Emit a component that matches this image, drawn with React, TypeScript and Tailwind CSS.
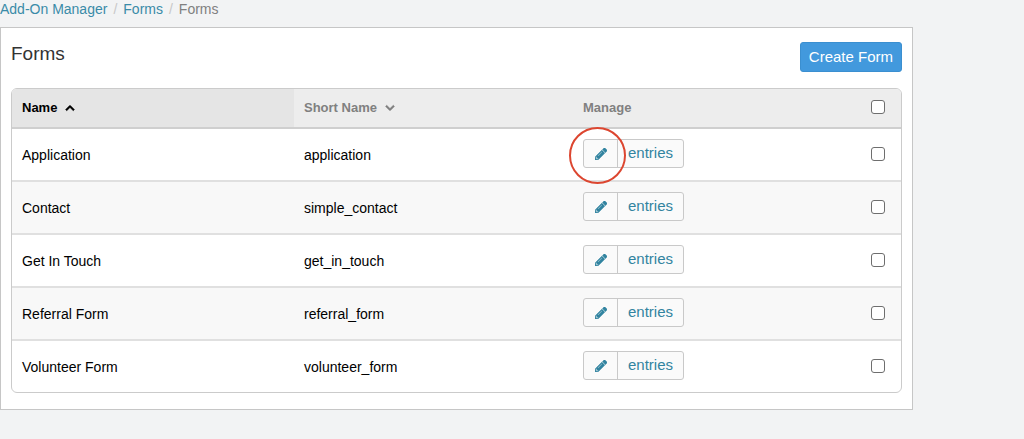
import { FaChevronDown, FaChevronUp, FaPencilAlt } from "react-icons/fa";

type Form = { name: string; shortName: string; highlighted?: boolean };

const forms: Form[] = [
  { name: "Application", shortName: "application", highlighted: true },
  { name: "Contact", shortName: "simple_contact" },
  { name: "Get In Touch", shortName: "get_in_touch" },
  { name: "Referral Form", shortName: "referral_form" },
  { name: "Volunteer Form", shortName: "volunteer_form" },
];

function Checkbox({ label }: { label: string }) {
  return (
    <input
      type="checkbox"
      aria-label={label}
      className="block size-3.5 appearance-none rounded-[3px] border border-[#6e6e6e] bg-white checked:bg-[#4299e1]"
    />
  );
}

function Breadcrumbs() {
  return (
    <nav aria-label="Breadcrumb" className="flex h-[27px] gap-1.5 text-[14px] leading-[18px]">
      <a href="#addons" className="text-[#3a8ba8]">Add-On Manager</a>
      <span className="text-[#c8c8c8]">/</span>
      <a href="#forms" className="text-[#3a8ba8]">Forms</a>
      <span className="text-[#c8c8c8]">/</span>
      <span className="text-[#808080]">Forms</span>
    </nav>
  );
}

function ManageButtons({ form }: { form: Form }) {
  return (
    <div className="relative inline-flex h-[29px] rounded-[3px] border border-[#c9c9c9] bg-[#fafafa] align-top text-[15px] text-[#3284a0]">
      <a
        href="#edit"
        aria-label={`Edit ${form.name}`}
        className="flex w-[34px] items-center justify-center border-r border-[#c9c9c9]"
      >
        <FaPencilAlt className="size-3" stroke="currentColor" strokeWidth="20" />
      </a>
      <a href="#entries" className="flex w-[65px] items-center justify-center">
        entries
      </a>
      {form.highlighted && (
        <span className="pointer-events-none absolute -top-[13px] -left-[15px] size-[57px] rounded-full border-2 border-[#dc4630]" />
      )}
    </div>
  );
}

export default function App() {
  return (
    <main className="min-h-screen bg-[#f2f3f4] pr-[111px] font-['Liberation_Sans',Arial,sans-serif] text-black">
      <Breadcrumbs />
      <section className="border border-[#c6c6c6] bg-white px-2.5 pt-3.5 pb-4">
        <header className="mb-4 flex items-start justify-between">
          <h1 className="text-[19px] leading-6 text-[#333]">Forms</h1>
          <button
            type="button"
            className="h-[30px] rounded-[3px] border border-[#3b8fd0] bg-[#4299dd] px-2 text-[15px] text-white"
          >
            Create Form
          </button>
        </header>
        <div className="overflow-hidden rounded-md border border-[#cbcbcb]">
          <table className="w-full table-fixed border-separate border-spacing-0 text-left">
            <colgroup>
              <col className="w-[282px]" />
              <col className="w-[279px]" />
              <col />
              <col className="w-10" />
            </colgroup>
            <thead className="bg-[#ededed] text-[13px] text-[#808080]">
              <tr className="h-10 *:border-b-2 *:border-[#cfcfcf]">
                <th className="bg-[#e5e5e5] px-2.5 text-black">
                  <button type="button" className="flex items-center gap-2 font-bold">
                    Name <FaChevronUp className="size-2.5" stroke="currentColor" strokeWidth="30" />
                  </button>
                </th>
                <th className="px-2.5">
                  <button type="button" className="flex items-center gap-2 font-bold">
                    Short Name <FaChevronDown className="size-2.5" stroke="currentColor" strokeWidth="30" />
                  </button>
                </th>
                <th className="px-2.5">Manage</th>
                <th className="px-2.5 pb-0.5">
                  <Checkbox label="Select all forms" />
                </th>
              </tr>
            </thead>
            <tbody className="text-[14px]">
              {forms.map((form) => (
                <tr
                  key={form.shortName}
                  className="h-[53px] *:border-b-2 *:border-[#e0e0e0] last:h-[51px] last:*:border-b-0 even:bg-[#f8f8f8]"
                >
                  <td className="px-2.5 pt-0.5">{form.name}</td>
                  <td className="px-2.5 pt-0.5">{form.shortName}</td>
                  <td className="px-2.5 pb-0.5">
                    <ManageButtons form={form} />
                  </td>
                  <td className="px-2.5 pb-0.5">
                    <Checkbox label={`Select ${form.name}`} />
                  </td>
                </tr>
              ))}
            </tbody>
          </table>
        </div>
      </section>
    </main>
  );
}
